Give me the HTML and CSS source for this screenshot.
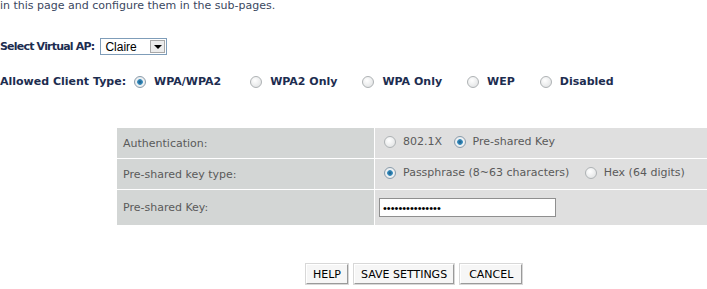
FILE: index.html
```html
<!DOCTYPE html>
<html>
<head>
    <title>Wireless Security</title>
    <link rel="stylesheet" href="styles.css">
</head>
<body>
    <p class="intro">in this page and configure them in the sub-pages.</p>

    <div class="field">
        <label class="field-label ap-label" for="virtualAp">Select Virtual AP:</label>
        <span class="select-box">
            <span class="select-value">Claire</span>
            <span class="select-arrow"></span>
        </span>
    </div>

    <div class="field client-type">
        <span class="field-label">Allowed Client Type:</span>
        <label class="opt first"><input type="radio" name="client" checked> WPA/WPA2</label>
        <label class="opt"><input type="radio" name="client"> WPA2 Only</label>
        <label class="opt"><input type="radio" name="client"> WPA Only</label>
        <label class="opt"><input type="radio" name="client"> WEP</label>
        <label class="opt"><input type="radio" name="client"> Disabled</label>
    </div>

    <table class="settings">
        <tr>
            <td class="label">Authentication:</td>
            <td class="value">
                <label class="opt-sm"><input type="radio" name="auth"> 802.1X</label>
                <label class="opt-sm"><input type="radio" name="auth" checked> Pre-shared Key</label>
            </td>
        </tr>
        <tr>
            <td class="label">Pre-shared key type:</td>
            <td class="value">
                <label class="opt-sm wide"><input type="radio" name="keytype" checked> Passphrase (8~63 characters)</label>
                <label class="opt-sm"><input type="radio" name="keytype"> Hex (64 digits)</label>
            </td>
        </tr>
        <tr class="last">
            <td class="label">Pre-shared Key:</td>
            <td class="value">
                <input type="password" class="key-input" value="abcdefghijklmno">
            </td>
        </tr>
    </table>

    <div class="buttons">
        <button class="button">HELP</button>
        <button class="button">SAVE SETTINGS</button>
        <button class="button">CANCEL</button>
    </div>
</body>
</html>
```

FILE: styles.css
```css
body {
    margin: 0;
    width: 707px;
    height: 289px;
    overflow: hidden;
    font-family: "DejaVu Sans", sans-serif;
    font-size: 11px;
    color: #2b3a55;
    background: #fff;
}
.intro { margin: 0; line-height: 12px; color: #3a4760; }
.field { display: flex; align-items: center; margin-top: 26px; height: 17px; }
.field-label { font-weight: bold; color: #1d2d50; margin-right: 6px; }
.ap-label { letter-spacing: -0.8px; }
.client-type { margin-top: 18px; }
.client-type .field-label { margin-right: 8px; }
.select-box {
    display: flex;
    align-items: center;
    justify-content: space-between;
    width: 67px;
    height: 17px;
    box-sizing: border-box;
    border: 1px solid #7f9db9;
    background: #fff;
    padding-left: 4px;
}
.select-value { color: #000; font-family: "Liberation Sans", sans-serif; font-size: 12px; }
.select-arrow {
    width: 15px;
    height: 13px;
    margin-right: 1px;
    background: #ececec;
    border: 1px solid #a8a8a8;
    box-sizing: border-box;
    position: relative;
}
.select-arrow::after {
    content: "";
    position: absolute;
    left: 3px;
    top: 4px;
    border-left: 4px solid transparent;
    border-right: 4px solid transparent;
    border-top: 4px solid #000;
}
.opt {
    display: flex;
    align-items: center;
    font-weight: bold;
    color: #1d2d50;
    margin-right: 25px;
}
.opt.first { margin-right: 29px; }
input[type="radio"] {
    appearance: none;
    -webkit-appearance: none;
    width: 12px;
    height: 12px;
    margin: 0 8px 0 0;
    border: 1px solid #aeb2b4;
    border-radius: 50%;
    background: radial-gradient(circle at 40% 35%, #ffffff, #dcdedf);
    box-sizing: border-box;
    flex: none;
}
input[type="radio"]:checked {
    border-color: #8a9cab;
    background: radial-gradient(circle, #1c5a86 0, #3a8fbf 2.5px, #f0f3f5 3.2px, #dfe3e6 100%);
}
.settings {
    margin: 38px 0 0 117px;
    border-collapse: collapse;
    width: 600px;
    color: #5a5a5a;
}
.settings td { height: 30px; padding: 0; border-bottom: 1px solid #fff; }
.settings tr.last td { height: 35px; border-bottom: none; }
.settings .label { width: 251px; padding-left: 6px; background: #d3d6d5; border-right: 1px solid #fff; }
.settings .value { background: #dfdfdf; padding-left: 9px; white-space: nowrap; }
.opt-sm { display: inline-flex; align-items: center; margin-right: 8px; }
.opt-sm input[type="radio"] { margin-right: 7px; }
.opt-sm.wide { margin-right: 12px; }
.key-input {
    width: 177px;
    height: 19px;
    box-sizing: border-box;
    border: 1px solid #8f8f8f;
    background: #fff;
    margin-left: -5px;
    padding: 0 3px;
    font-family: "Liberation Sans", sans-serif;
    font-size: 11px;
    color: #000;
}
.buttons { display: flex; gap: 6px; margin-top: 39px; padding-left: 306px; }
.button {
    height: 20px;
    padding: 0 6px;
    font-family: "DejaVu Sans", sans-serif;
    font-size: 11px;
    color: #000;
    background: #f6f6f6;
    border: 1px solid;
    border-color: #ffffff #9a9a9a #9a9a9a #ffffff;
    box-shadow: 0 0 0 1px #d8d8d8;
    cursor: pointer;
}
.button:last-child { padding: 0 8px; }
```
